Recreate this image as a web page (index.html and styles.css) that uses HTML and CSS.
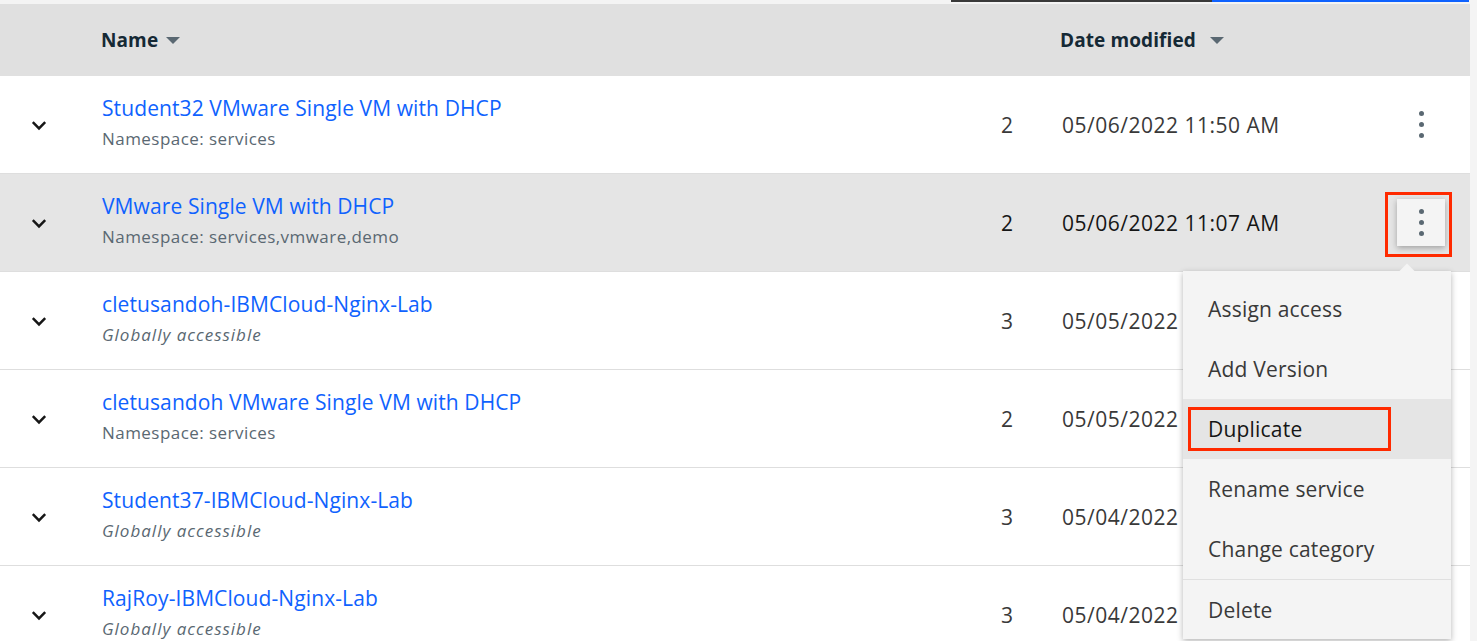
FILE: index.html
```html
<!DOCTYPE html>
<html lang="en">
<head>
<meta charset="utf-8">
<title>Services</title>
<link rel="stylesheet" href="styles.css">
</head>
<body>
<div class="page">
  <div class="topbar">
    <div class="topbar-gap"></div>
    <div class="topbar-dark"></div>
    <div class="topbar-blue"></div>
  </div>
  <div class="table">
    <div class="row head">
      <div class="cell expand"></div>
      <div class="cell name"><span class="th">Name</span><span class="sort"></span></div>
      <div class="cell count"></div>
      <div class="cell date"><span class="th">Date modified</span><span class="sort sort-date"></span></div>
      <div class="cell actions"></div>
    </div>

    <div class="row">
      <div class="cell expand"><svg class="chev" viewBox="0 0 16 16"><path d="M2.5 5.5 L8 11 L13.5 5.5"/></svg></div>
      <div class="cell name"><a class="title">Student32 VMware Single VM with DHCP</a><span class="sub">Namespace: services</span></div>
      <div class="cell count">2</div>
      <div class="cell date">05/06/2022 11:50 AM</div>
      <div class="cell actions"><span class="ofl"><i></i><i></i><i></i></span></div>
    </div>

    <div class="row hover">
      <div class="cell expand"><svg class="chev" viewBox="0 0 16 16"><path d="M2.5 5.5 L8 11 L13.5 5.5"/></svg></div>
      <div class="cell name"><a class="title">VMware Single VM with DHCP</a><span class="sub">Namespace: services,vmware,demo</span></div>
      <div class="cell count">2</div>
      <div class="cell date">05/06/2022 11:07 AM</div>
      <div class="cell actions">
        <span class="ofl open"><i></i><i></i><i></i><span class="mark mark-btn"></span></span>
        <div class="menu">
          <div class="caret"></div>
          <div class="item">Assign access</div>
          <div class="item">Add Version</div>
          <div class="item active">Duplicate<span class="mark mark-item"></span></div>
          <div class="item">Rename service</div>
          <div class="item">Change category</div>
          <div class="item danger-sep">Delete</div>
        </div>
      </div>
    </div>

    <div class="row">
      <div class="cell expand"><svg class="chev" viewBox="0 0 16 16"><path d="M2.5 5.5 L8 11 L13.5 5.5"/></svg></div>
      <div class="cell name"><a class="title">cletusandoh-IBMCloud-Nginx-Lab</a><span class="sub it">Globally accessible</span></div>
      <div class="cell count">3</div>
      <div class="cell date">05/05/2022</div>
      <div class="cell actions"><span class="ofl"><i></i><i></i><i></i></span></div>
    </div>

    <div class="row">
      <div class="cell expand"><svg class="chev" viewBox="0 0 16 16"><path d="M2.5 5.5 L8 11 L13.5 5.5"/></svg></div>
      <div class="cell name"><a class="title">cletusandoh VMware Single VM with DHCP</a><span class="sub">Namespace: services</span></div>
      <div class="cell count">2</div>
      <div class="cell date">05/05/2022</div>
      <div class="cell actions"><span class="ofl"><i></i><i></i><i></i></span></div>
    </div>

    <div class="row">
      <div class="cell expand"><svg class="chev" viewBox="0 0 16 16"><path d="M2.5 5.5 L8 11 L13.5 5.5"/></svg></div>
      <div class="cell name"><a class="title">Student37-IBMCloud-Nginx-Lab</a><span class="sub it">Globally accessible</span></div>
      <div class="cell count">3</div>
      <div class="cell date">05/04/2022</div>
      <div class="cell actions"><span class="ofl"><i></i><i></i><i></i></span></div>
    </div>

    <div class="row">
      <div class="cell expand"><svg class="chev" viewBox="0 0 16 16"><path d="M2.5 5.5 L8 11 L13.5 5.5"/></svg></div>
      <div class="cell name"><a class="title">RajRoy-IBMCloud-Nginx-Lab</a><span class="sub it">Globally accessible</span></div>
      <div class="cell count">3</div>
      <div class="cell date">05/04/2022</div>
      <div class="cell actions"><span class="ofl"><i></i><i></i><i></i></span></div>
    </div>
  </div>
</div>
</body>
</html>
```

FILE: styles.css
```css
* { box-sizing: border-box; }
html, body { margin: 0; padding: 0; }
body {
  background: #f4f4f4;
  font-family: "Open Sans", "Noto Sans", sans-serif;
  overflow: hidden;
  height: 641px;
}
.page { width: 1470px; }

.topbar { display: flex; height: 4px; background: #f4f4f4; }
.topbar-gap { width: 951px; }
.topbar-dark { width: 261px; height: 2px; background: #393939; }
.topbar-blue { width: 257px; height: 2px; background: #0f62fe; }

.table { background: #fff; }

.row {
  display: grid;
  grid-template-columns: 78px 882px 100px 312px 98px;
  height: 98px;
  border-bottom: 1px solid #dedede;
  align-items: center;
}
.row.head {
  height: 72px;
  background: #e0e0e0;
  border-bottom: none;
}
.row.hover { background: #e5e5e5; }

.cell { min-width: 0; }
.expand { display: flex; justify-content: center; align-items: center; }
.chev { width: 18px; height: 18px; fill: none; stroke: #161616; stroke-width: 2.2; }

.name { padding-left: 24px; display: flex; flex-direction: column; }
.head .name { flex-direction: row; align-items: center; padding-left: 23px; }
.th { font-size: 19px; font-weight: 700; color: #152935; letter-spacing: 0.1px; }
.sort {
  width: 0; height: 0; margin-left: 8px; margin-top: 1px;
  border-left: 7px solid transparent; border-right: 7px solid transparent;
  border-top: 7px solid #5a6872;
}
.sort-date { margin-left: 14px; }
.head .date { display: flex; align-items: center; padding-left: 0; }

.title { font-size: 21px; color: #0f62fe; line-height: 28px; margin-top: -6px; letter-spacing: 0.1px; }
.sub { font-size: 17px; color: #5a6872; line-height: 22px; margin-top: 6px; letter-spacing: 0.45px; }
.sub.it { font-style: italic; letter-spacing: 1px; }

.count { text-align: right; padding-right: 47px; font-size: 21px; color: #393939; }
.date { padding-left: 2px; font-size: 21px; color: #393939; letter-spacing: 0.5px; white-space: nowrap; }
.hover .count, .hover .date { color: #161616; }

.actions { display: flex; justify-content: center; align-items: center; position: relative; height: 100%; }
.ofl {
  width: 48px; height: 47px;
  display: flex; flex-direction: column; align-items: center; justify-content: center; gap: 6px;
  position: relative;
}
.ofl i { display: block; width: 5px; height: 5px; border-radius: 50%; background: #5a6872; }
.ofl.open { background: #f4f4f4; box-shadow: 0 2px 6px rgba(0,0,0,0.3); }

.mark { position: absolute; border: 3px solid #ff2a00; pointer-events: none; }
.mark-btn { left: -12px; top: -7px; width: 67px; height: 65px; }

.menu {
  position: absolute;
  top: 97px;
  left: -189px;
  width: 268px;
  padding-top: 8px;
  background: #f4f4f4;
  box-shadow: 0 2px 6px rgba(0,0,0,0.3);
  z-index: 5;
}
.caret {
  position: absolute; top: -5px; left: 218px;
  width: 12px; height: 12px; background: #f4f4f4;
  transform: rotate(45deg);
}
.item {
  position: relative;
  height: 60px;
  display: flex; align-items: center;
  padding-left: 25px;
  font-size: 21px; color: #393939; letter-spacing: 0.2px;
}
.item.active { background: #e5e5e5; color: #161616; }
.item.danger-sep { border-top: 1px solid #e0e0e0; }
.mark-item { left: 5px; top: 8px; width: 203px; height: 44px; }
```
